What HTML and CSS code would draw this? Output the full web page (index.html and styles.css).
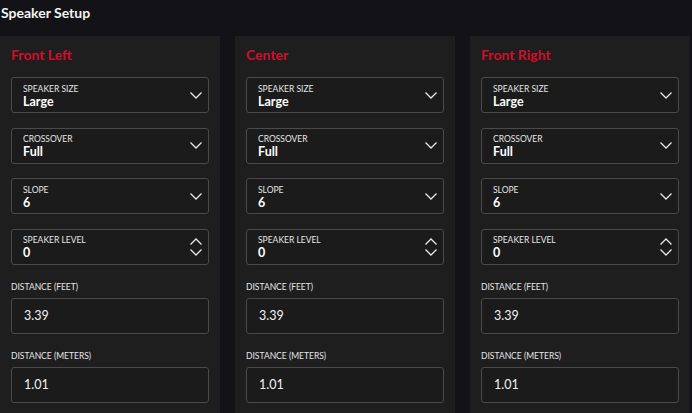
FILE: index.html
```html
<!DOCTYPE html>
<html>
<head>
<meta charset="utf-8">
<link rel="stylesheet" href="styles.css">
</head>
<body>
<h1 class="page-title">Speaker Setup</h1>
<div class="cards">
  <section class="card">
    <h2 class="card-title">Front Left</h2>
    <div class="selects">
      <div class="select"><div class="sel-text"><span class="sel-label">SPEAKER SIZE</span><span class="sel-value">Large</span></div><svg class="chev" viewBox="0 0 12 7"><path d="M0.5 0.5 L6 6 L11.5 0.5"/></svg></div>
      <div class="select"><div class="sel-text"><span class="sel-label">CROSSOVER</span><span class="sel-value">Full</span></div><svg class="chev" viewBox="0 0 12 7"><path d="M0.5 0.5 L6 6 L11.5 0.5"/></svg></div>
      <div class="select"><div class="sel-text"><span class="sel-label">SLOPE</span><span class="sel-value">6</span></div><svg class="chev" viewBox="0 0 12 7"><path d="M0.5 0.5 L6 6 L11.5 0.5"/></svg></div>
      <div class="select"><div class="sel-text"><span class="sel-label">SPEAKER LEVEL</span><span class="sel-value">0</span></div><div class="spin"><svg class="chev" viewBox="0 0 12 7"><path d="M0.5 6.5 L6 1 L11.5 6.5"/></svg><svg class="chev" viewBox="0 0 12 7"><path d="M0.5 0.5 L6 6 L11.5 0.5"/></svg></div></div>
    </div>
    <div class="field"><label class="field-label">DISTANCE (FEET)</label><div class="input">3.39</div></div>
    <div class="field"><label class="field-label">DISTANCE (METERS)</label><div class="input">1.01</div></div>
  </section>
  <section class="card">
    <h2 class="card-title">Center</h2>
    <div class="selects">
      <div class="select"><div class="sel-text"><span class="sel-label">SPEAKER SIZE</span><span class="sel-value">Large</span></div><svg class="chev" viewBox="0 0 12 7"><path d="M0.5 0.5 L6 6 L11.5 0.5"/></svg></div>
      <div class="select"><div class="sel-text"><span class="sel-label">CROSSOVER</span><span class="sel-value">Full</span></div><svg class="chev" viewBox="0 0 12 7"><path d="M0.5 0.5 L6 6 L11.5 0.5"/></svg></div>
      <div class="select"><div class="sel-text"><span class="sel-label">SLOPE</span><span class="sel-value">6</span></div><svg class="chev" viewBox="0 0 12 7"><path d="M0.5 0.5 L6 6 L11.5 0.5"/></svg></div>
      <div class="select"><div class="sel-text"><span class="sel-label">SPEAKER LEVEL</span><span class="sel-value">0</span></div><div class="spin"><svg class="chev" viewBox="0 0 12 7"><path d="M0.5 6.5 L6 1 L11.5 6.5"/></svg><svg class="chev" viewBox="0 0 12 7"><path d="M0.5 0.5 L6 6 L11.5 0.5"/></svg></div></div>
    </div>
    <div class="field"><label class="field-label">DISTANCE (FEET)</label><div class="input">3.39</div></div>
    <div class="field"><label class="field-label">DISTANCE (METERS)</label><div class="input">1.01</div></div>
  </section>
  <section class="card">
    <h2 class="card-title">Front Right</h2>
    <div class="selects">
      <div class="select"><div class="sel-text"><span class="sel-label">SPEAKER SIZE</span><span class="sel-value">Large</span></div><svg class="chev" viewBox="0 0 12 7"><path d="M0.5 0.5 L6 6 L11.5 0.5"/></svg></div>
      <div class="select"><div class="sel-text"><span class="sel-label">CROSSOVER</span><span class="sel-value">Full</span></div><svg class="chev" viewBox="0 0 12 7"><path d="M0.5 0.5 L6 6 L11.5 0.5"/></svg></div>
      <div class="select"><div class="sel-text"><span class="sel-label">SLOPE</span><span class="sel-value">6</span></div><svg class="chev" viewBox="0 0 12 7"><path d="M0.5 0.5 L6 6 L11.5 0.5"/></svg></div>
      <div class="select"><div class="sel-text"><span class="sel-label">SPEAKER LEVEL</span><span class="sel-value">0</span></div><div class="spin"><svg class="chev" viewBox="0 0 12 7"><path d="M0.5 6.5 L6 1 L11.5 6.5"/></svg><svg class="chev" viewBox="0 0 12 7"><path d="M0.5 0.5 L6 6 L11.5 0.5"/></svg></div></div>
    </div>
    <div class="field"><label class="field-label">DISTANCE (FEET)</label><div class="input">3.39</div></div>
    <div class="field"><label class="field-label">DISTANCE (METERS)</label><div class="input">1.01</div></div>
  </section>
</div>
</body>
</html>
```
FILE: styles.css
```css
html, body {
  margin: 0;
  padding: 0;
  height: 413px;
  overflow: hidden;
}
body {
  background: #121217;
  font-family: Lato, "Open Sans", sans-serif;
  color: #ffffff;
}
.page-title {
  margin: 0;
  padding: 4px 0 0 1px;
  height: 36px;
  box-sizing: border-box;
  font-size: 14px;
  font-weight: 700;
  line-height: 18px;
  color: #f2f2f2;
}
.cards {
  display: grid;
  grid-template-columns: 220px 220px 220px;
  column-gap: 15px;
}
.card {
  background: #1e1e1e;
  padding: 10px 11px 11px;
  height: 377px;
  box-sizing: border-box;
}
.card-title {
  margin: 0 0 13px;
  font-size: 14px;
  font-weight: 700;
  line-height: 18px;
  color: #d10f2b;
}
.selects {
  display: flex;
  flex-direction: column;
  gap: 14.67px;
}
.select {
  height: 36px;
  box-sizing: border-box;
  border: 1px solid #4a4a4a;
  border-radius: 3px;
  background: #1b1b1b;
  display: flex;
  align-items: center;
  justify-content: space-between;
  padding: 0 6px 0 11px;
}
.sel-text {
  display: flex;
  flex-direction: column;
  padding-top: 2px;
}
.sel-label {
  font-size: 8.5px;
  line-height: 11px;
  color: #e6e6e6;
}
.sel-value {
  font-size: 12.5px;
  font-weight: 700;
  line-height: 14px;
  color: #ffffff;
}
.chev {
  width: 12px;
  height: 7px;
  fill: none;
  stroke: #e8e8e8;
  stroke-width: 1.3;
  display: block;
}
.spin {
  display: flex;
  flex-direction: column;
  gap: 4px;
  margin-top: 1px;
}
.field {
  display: flex;
  flex-direction: column;
  margin-top: 17px;
}
.field-label {
  font-size: 8.5px;
  line-height: 11px;
  color: #e6e6e6;
  margin-bottom: 5px;
}
.input {
  height: 36px;
  box-sizing: border-box;
  border: 1px solid #4a4a4a;
  border-radius: 3px;
  background: #1b1b1b;
  padding: 0 12px;
  display: flex;
  align-items: center;
  font-size: 12.5px;
  color: #f2f2f2;
}
```
